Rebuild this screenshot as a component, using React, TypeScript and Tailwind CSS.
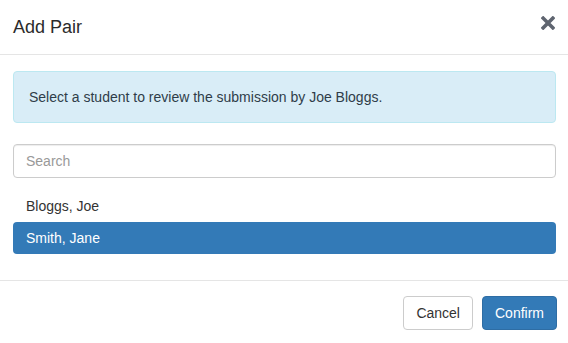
const students = [
  { id: "bloggs", name: "Bloggs, Joe" },
  { id: "smith", name: "Smith, Jane" },
];

function CloseIcon() {
  return (
    <svg width="14" height="14" viewBox="0 0 14 14" aria-hidden="true">
      <path
        d="M2.2 2.2 L11.8 11.8 M11.8 2.2 L2.2 11.8"
        stroke="#5f6570"
        strokeWidth="3.6"
        strokeLinecap="square"
      />
    </svg>
  );
}

export default function App() {
  const selected = "smith";

  return (
    <div
      className="w-[568px] h-[343px] bg-white text-[#333] text-[14px] leading-[20px] overflow-hidden"
      style={{ fontFamily: '"Liberation Sans", Arial, sans-serif' }}
    >
      <div className="flex items-start justify-between pl-[13px] pr-[12px] pt-[14px] pb-[14px] border-b border-[#e5e5e5]">
        <h4 className="text-[18px] leading-[26px] font-medium text-[#2b2b2b]">Add Pair</h4>
        <button className="mt-[2px] pr-[1px]">
          <CloseIcon />
        </button>
      </div>

      <div className="pl-[13px] pr-[12px] pt-[16px] pb-[26px]">
        <div className="border border-[#bce8f1] bg-[#d9edf7] text-[#2f3d49] rounded-[4px] px-[15px] py-[15px]">
          Select a student to review the submission by Joe Bloggs.
        </div>

        <input
          type="text"
          placeholder="Search"
          className="mt-[21px] w-full h-[34px] border border-[#ccc] rounded-[4px] px-[12px] text-[14px] placeholder:text-[#999] shadow-[inset_0_1px_1px_rgba(0,0,0,0.075)] outline-none"
        />

        <ul className="mt-[12px]">
          {students.map((s) => (
            <li
              key={s.id}
              className={
                s.id === selected
                  ? "px-[13px] py-[6px] rounded-[4px] bg-[#337ab7] text-white"
                  : "px-[13px] py-[6px] text-[#333]"
              }
            >
              {s.name}
            </li>
          ))}
        </ul>
      </div>

      <div className="flex justify-end gap-[9px] border-t border-[#e5e5e5] pt-[15px] pr-[11px]">
        <button className="h-[34px] px-[12px] border border-[#ccc] rounded-[4px] bg-white text-[#333]">
          Cancel
        </button>
        <button className="h-[34px] px-[12px] border border-[#2e6da4] rounded-[4px] bg-[#337ab7] text-white">
          Confirm
        </button>
      </div>
    </div>
  );
}
